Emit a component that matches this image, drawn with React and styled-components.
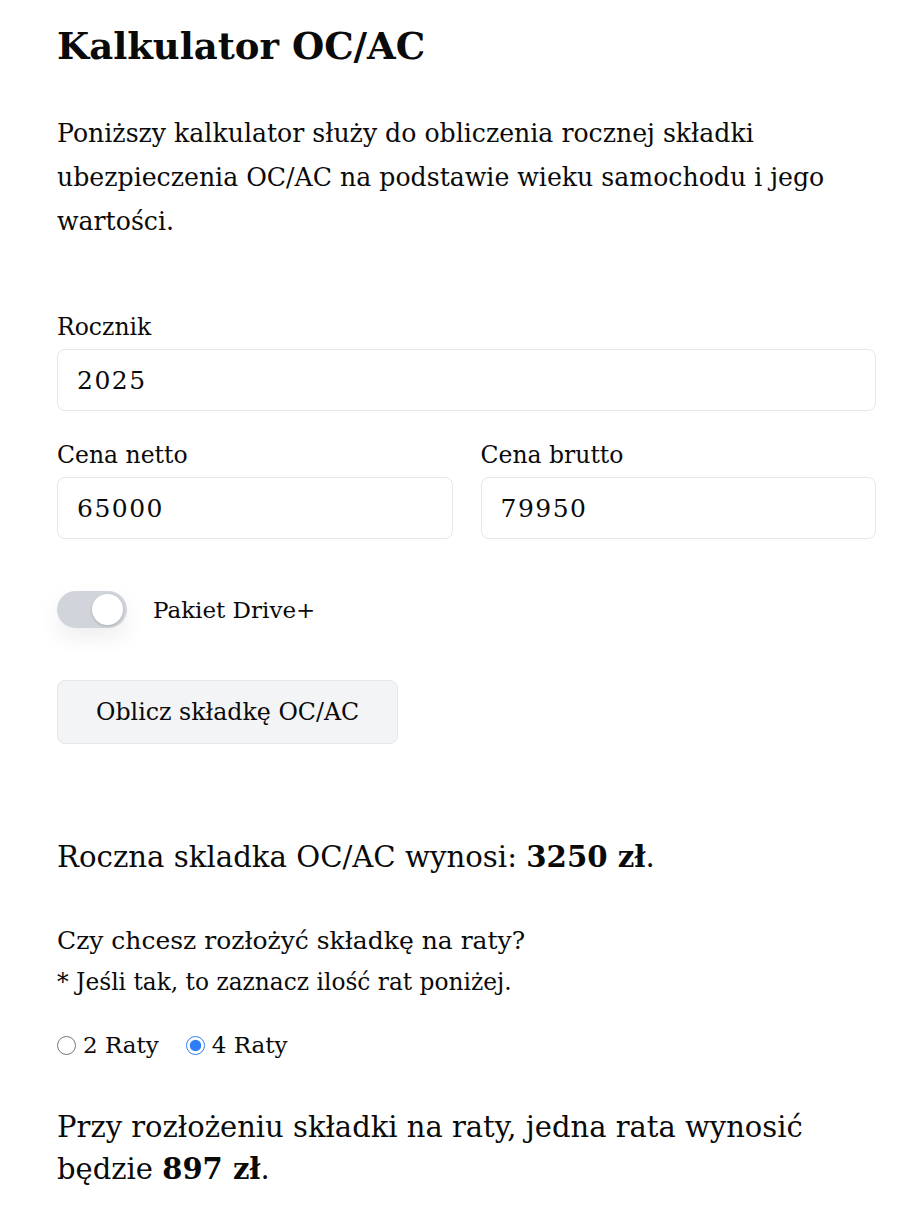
import React, { useState } from "react";
import styled, { createGlobalStyle } from "styled-components";

const GlobalStyle = createGlobalStyle`
  body {
    margin: 0;
    background: #fff;
    color: #0a0a0a;
    font-family: "DejaVu Serif", "Liberation Serif", serif;
  }
`;

const Page = styled.div`
  padding: 22px 28px 40px 57px;
`;

const Title = styled.h1`
  margin: 0 0 42px;
  font-size: 37px;
  font-weight: 700;
  line-height: 48px;
`;

const Intro = styled.p`
  margin: 0 0 68px;
  font-size: 25.2px;
  line-height: 44px;
`;

const Field = styled.label`
  display: flex;
  flex-direction: column;
  gap: 6px;
  font-size: 23.5px;
  line-height: 31px;
`;

const Input = styled.input`
  box-sizing: border-box;
  height: 62px;
  width: 100%;
  padding: 0 19px;
  border: 1px solid #e5e7eb;
  border-radius: 8px;
  font: inherit;
  font-size: 25px;
  letter-spacing: 1.5px;
  color: #0a0a0a;
  outline: none;
`;

const Row = styled.div`
  display: grid;
  grid-template-columns: 1fr 1fr;
  gap: 28px;
  margin-top: 29px;
`;

const ToggleRow = styled.div`
  display: flex;
  align-items: center;
  gap: 26px;
  margin-top: 52px;
  font-size: 23px;
`;

const Track = styled.button`
  position: relative;
  width: 70px;
  height: 37px;
  padding: 0;
  border: none;
  border-radius: 19px;
  background: ${(p) => (p.$on ? "#3b82f6" : "#d1d5db")};
  cursor: pointer;
  box-shadow: 0 10px 22px rgba(0, 0, 0, 0.07);
`;

const Knob = styled.span`
  position: absolute;
  top: 3px;
  left: 35px;
  width: 31px;
  height: 31px;
  border-radius: 50%;
  background: #fff;
  box-shadow: 0 1px 3px rgba(0, 0, 0, 0.2);
`;

const Button = styled.button`
  margin-top: 52px;
  height: 64px;
  padding: 0 38px;
  border: 1px solid #e5e7eb;
  border-radius: 8px;
  background: #f3f4f6;
  font: inherit;
  font-size: 23.7px;
  color: #0a0a0a;
  cursor: pointer;
`;

const Result = styled.p`
  margin: 92px 0 0;
  font-size: 29.2px;
  line-height: 42px;
  b {
    font-weight: 700;
  }
`;

const Question = styled.p`
  margin: 48px 0 0;
  font-size: 25px;
  line-height: 30px;
`;

const Note = styled.p`
  margin: 11px 0 0;
  font-size: 23.3px;
  line-height: 30px;
`;

const Radios = styled.div`
  display: flex;
  gap: 27px;
  margin-top: 33px;
  font-size: 23px;
  line-height: 30px;
`;

const RadioLabel = styled.label`
  display: flex;
  align-items: center;
  gap: 7px;
  cursor: pointer;
`;

const Radio = styled.input`
  margin: 0;
  width: 19px;
  height: 19px;
  accent-color: #2f7df6;
`;

const Installment = styled.p`
  margin: 46px 0 0;
  font-size: 29px;
  line-height: 42px;
`;

export default function App() {
  const [raty, setRaty] = useState(4);
  const [drive, setDrive] = useState(false);
  const skladka = 3250;
  const rata = raty === 4 ? 897 : 1700;
  return (
    <Page>
      <GlobalStyle />
      <Title>Kalkulator OC/AC</Title>
      <Intro>
        Poniższy kalkulator służy do obliczenia rocznej składki ubezpieczenia
        OC/AC na podstawie wieku samochodu i jego wartości.
      </Intro>
      <Field>
        Rocznik
        <Input defaultValue="2025" />
      </Field>
      <Row>
        <Field>
          Cena netto
          <Input defaultValue="65000" />
        </Field>
        <Field>
          Cena brutto
          <Input defaultValue="79950" />
        </Field>
      </Row>
      <ToggleRow>
        <Track $on={drive} onClick={() => setDrive(!drive)}>
          <Knob $on={drive} />
        </Track>
        Pakiet Drive+
      </ToggleRow>
      <Button>Oblicz składkę OC/AC</Button>
      <Result>
        Roczna skladka OC/AC wynosi: <b>{skladka} zł</b>.
      </Result>
      <Question>Czy chcesz rozłożyć składkę na raty?</Question>
      <Note>* Jeśli tak, to zaznacz ilość rat poniżej.</Note>
      <Radios>
        <RadioLabel>
          <Radio
            type="radio"
            name="raty"
            checked={raty === 2}
            onChange={() => setRaty(2)}
          />
          2 Raty
        </RadioLabel>
        <RadioLabel>
          <Radio
            type="radio"
            name="raty"
            checked={raty === 4}
            onChange={() => setRaty(4)}
          />
          4 Raty
        </RadioLabel>
      </Radios>
      <Installment>
        Przy rozłożeniu składki na raty, jedna rata wynosić będzie{" "}
        <b>{rata} zł</b>.
      </Installment>
    </Page>
  );
}
